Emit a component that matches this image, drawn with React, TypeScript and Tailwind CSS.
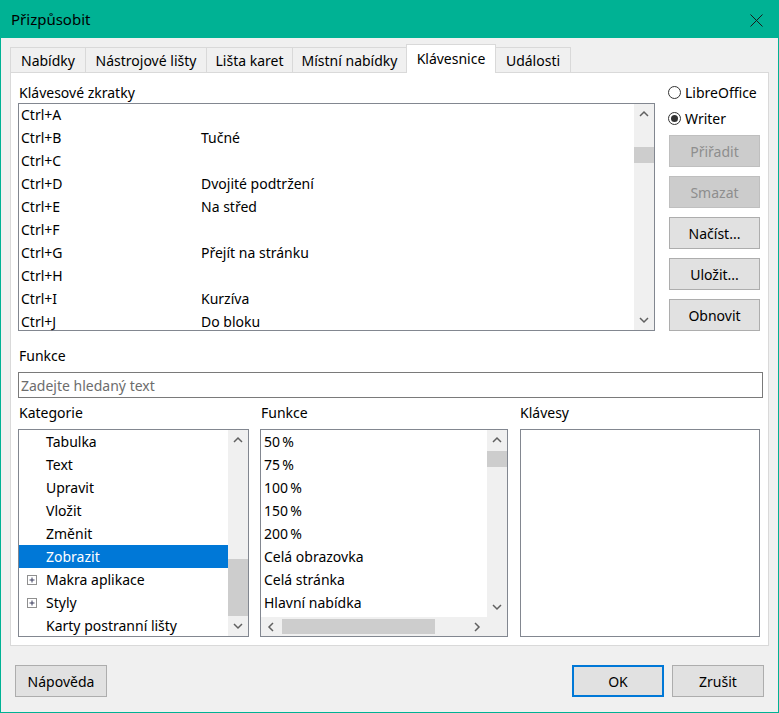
import React from "react";

type Dir = "up" | "down" | "left" | "right";

function Chevron({ dir }: { dir: Dir }) {
  const vertical = dir === "up" || dir === "down";
  const pts = {
    up: "1,6 5,2 9,6",
    down: "1,2 5,6 9,2",
    left: "6,1 2,5 6,9",
    right: "2,1 6,5 2,9",
  }[dir];
  return (
    <svg width={vertical ? 10 : 8} height={vertical ? 8 : 10}>
      <polyline points={pts} fill="none" stroke="#606060" strokeWidth="1.5" />
    </svg>
  );
}

function VScroll({ thumb }: { thumb: string }) {
  return (
    <div className="flex w-[20px] shrink-0 flex-col bg-[#f0f0f0]">
      <div className="flex h-[20px] items-center justify-center">
        <Chevron dir="up" />
      </div>
      <div className="flex-1">
        <div className={thumb} />
      </div>
      <div className="flex h-[20px] items-center justify-center">
        <Chevron dir="down" />
      </div>
    </div>
  );
}

function Radio({ checked, label }: { checked?: boolean; label: string }) {
  return (
    <div className="flex h-[20px] items-center gap-[4px]">
      <div className="flex h-[13px] w-[13px] items-center justify-center rounded-full border border-[#333333] bg-white">
        {checked && <div className="h-[7px] w-[7px] rounded-full bg-[#333333]" />}
      </div>
      <span>{label}</span>
    </div>
  );
}

function Button({ label, disabled }: { label: string; disabled?: boolean }) {
  return (
    <div
      className={
        disabled
          ? "flex h-[32px] w-[91px] items-center justify-center border border-[#bfbfbf] bg-[#cccccc] text-[#8e8e8e]"
          : "flex h-[32px] w-[91px] items-center justify-center border border-[#adadad] bg-[#e1e1e1]"
      }
    >
      {label}
    </div>
  );
}

function Expander() {
  return (
    <svg width="10" height="10" className="shrink-0">
      <rect x="0.5" y="0.5" width="9" height="9" fill="white" stroke="#8f8f8f" />
      <path d="M2.5 5h5M5 2.5v5" stroke="#3a3d5c" strokeWidth="1" />
    </svg>
  );
}

const tabs = [
  { label: "Nabídky", w: "w-[76px]" },
  { label: "Nástrojové lišty", w: "w-[122px]" },
  { label: "Lišta karet", w: "w-[87px]" },
  { label: "Místní nabídky", w: "w-[115px]" },
  { label: "Klávesnice", w: "w-[90px]", active: true },
  { label: "Události", w: "w-[76px]" },
];

const shortcuts = [
  ["Ctrl+A", ""],
  ["Ctrl+B", "Tučné"],
  ["Ctrl+C", ""],
  ["Ctrl+D", "Dvojité podtržení"],
  ["Ctrl+E", "Na střed"],
  ["Ctrl+F", ""],
  ["Ctrl+G", "Přejít na stránku"],
  ["Ctrl+H", ""],
  ["Ctrl+I", "Kurzíva"],
  ["Ctrl+J", "Do bloku"],
];

const categories = [
  { label: "Tabulka" },
  { label: "Text" },
  { label: "Upravit" },
  { label: "Vložit" },
  { label: "Změnit" },
  { label: "Zobrazit", selected: true },
  { label: "Makra aplikace", plus: true },
  { label: "Styly", plus: true },
  { label: "Karty postranní lišty" },
];

const functions = [
  "50\u202F%",
  "75\u202F%",
  "100\u202F%",
  "150\u202F%",
  "200\u202F%",
  "Celá obrazovka",
  "Celá stránka",
  "Hlavní nabídka",
];

export default function App() {
  return (
    <div className="flex h-[713px] w-[779px] flex-col border border-[#00b294] font-['Noto_Sans',sans-serif] text-[14px] text-black">
      {/* title bar */}
      <div className="flex h-[37px] shrink-0 items-center justify-between bg-[#00b294] pl-[10px] pr-[15px]">
        <span className="text-[15px]">Přizpůsobit</span>
        <svg width="13" height="13" className="mt-[2px]">
          <path d="M0.5 0.5L12.5 12.5M12.5 0.5L0.5 12.5" stroke="#1a1a1a" strokeWidth="1" />
        </svg>
      </div>

      <div className="flex flex-1 flex-col bg-[#f0f0f0] px-[9px] pt-[7px]">
        {/* tabs */}
        <div className="flex h-[27px] items-end">
          {tabs.map((t, i) =>
            t.active ? (
              <div
                key={i}
                className={`relative z-10 -mb-[1px] -ml-[1px] flex h-[29px] items-center justify-center border-x border-t border-[#d9d9d9] bg-white pb-[1px] ${t.w}`}
              >
                {t.label}
              </div>
            ) : (
              <div
                key={i}
                className={`flex h-[25px] items-center justify-center border-x border-t border-[#d9d9d9] bg-[#f0f0f0] ${i === 0 ? "" : "-ml-[1px]"} ${t.w}`}
              >
                {t.label}
              </div>
            )
          )}
        </div>

        {/* panel */}
        <div className="flex h-[574px] w-[759px] flex-col border border-[#d9d9d9] bg-white pl-[7px] pt-[10px]">
          <div className="flex">
            <div className="flex w-[637px] flex-col">
              <div className="h-[20px] pl-[1px] leading-[20px]">Klávesové zkratky</div>
              <div className="flex h-[228px] border border-[#828790] bg-white">
                <div className="-mt-[1px] flex-1">
                  {shortcuts.map(([k, v], i) => (
                    <div key={i} className="flex h-[23px] items-center leading-[18px]">
                      <span className="w-[182px] pl-[2px]">{k}</span>
                      <span>{v}</span>
                    </div>
                  ))}
                </div>
                <VScroll thumb="mt-[23px] h-[16px] bg-[#cdcdcd]" />
              </div>
            </div>

            <div className="ml-[13px] flex flex-col">
              <div className="-mt-[1px]">
                <Radio label="LibreOffice" />
              </div>
              <div className="mt-[6px]">
                <Radio checked label="Writer" />
              </div>
              <div className="ml-[1px] mt-[7px] flex flex-col gap-[9px]">
                <Button label="Přiřadit" disabled />
                <Button label="Smazat" disabled />
                <Button label="Načíst..." />
                <Button label="Uložit..." />
                <Button label="Obnovit" />
              </div>
            </div>
          </div>

          <div className="mt-[15px] h-[20px] pl-[1px] leading-[20px]">Funkce</div>
          <div className="mt-[6px] flex h-[26px] w-[745px] items-center border border-[#7a7a7a] bg-white pl-[2px] text-[#6d6d6d]">
            Zadejte hledaný text
          </div>

          <div className="mt-[5px] flex h-[20px] leading-[20px]">
            <span className="w-[242px] pl-[1px]">Kategorie</span>
            <span className="w-[259px] pl-[1px]">Funkce</span>
            <span className="pl-[1px]">Klávesy</span>
          </div>

          <div className="mt-[6px] flex h-[208px]">
            {/* Kategorie */}
            <div className="flex w-[231px] border border-[#828790] bg-white">
              <div className="flex-1">
                {categories.map((c, i) => (
                  <div
                    key={i}
                    className={
                      c.selected
                        ? "flex h-[23px] items-center bg-[#0078d7] pl-[27px] leading-[18px] text-white"
                        : "flex h-[23px] items-center pl-[8px] leading-[18px]"
                    }
                  >
                    {!c.selected && (
                      <span className="flex w-[19px] items-center">{c.plus && <Expander />}</span>
                    )}
                    <span>{c.label}</span>
                  </div>
                ))}
              </div>
              <VScroll thumb="mt-[109px] h-[57px] bg-[#cdcdcd]" />
            </div>

            {/* Funkce */}
            <div className="ml-[11px] flex w-[248px] flex-col border border-[#828790] bg-white">
              <div className="flex flex-1 overflow-hidden">
                <div className="flex-1 overflow-hidden">
                  {functions.map((f, i) => (
                    <div key={i} className="flex h-[23px] items-center pl-[3px] leading-[18px]">
                      {f}
                    </div>
                  ))}
                </div>
                <VScroll thumb="mt-[1px] h-[16px] bg-[#cdcdcd]" />
              </div>
              <div className="flex h-[19px] shrink-0 bg-[#f0f0f0]">
                <div className="flex w-[20px] items-center justify-center">
                  <Chevron dir="left" />
                </div>
                <div className="flex flex-1 items-center">
                  <div className="ml-[1px] h-[15px] w-[153px] bg-[#cdcdcd]" />
                </div>
                <div className="flex w-[20px] items-center justify-center">
                  <Chevron dir="right" />
                </div>
                <div className="w-[20px]" />
              </div>
            </div>

            {/* Klávesy */}
            <div className="ml-[12px] w-[240px] border border-[#828790] bg-white" />
          </div>
        </div>

        {/* bottom buttons */}
        <div className="mt-[19px] flex justify-between px-[5px]">
          <div className="flex h-[32px] w-[92px] items-center justify-center border border-[#adadad] bg-[#e1e1e1]">
            Nápověda
          </div>
          <div className="flex gap-[8px]">
            <div className="flex h-[32px] w-[92px] items-center justify-center border-2 border-[#0078d7] bg-[#e1e1e1]">
              OK
            </div>
            <div className="flex h-[32px] w-[92px] items-center justify-center border border-[#adadad] bg-[#e1e1e1]">
              Zrušit
            </div>
          </div>
        </div>
      </div>
    </div>
  );
}
